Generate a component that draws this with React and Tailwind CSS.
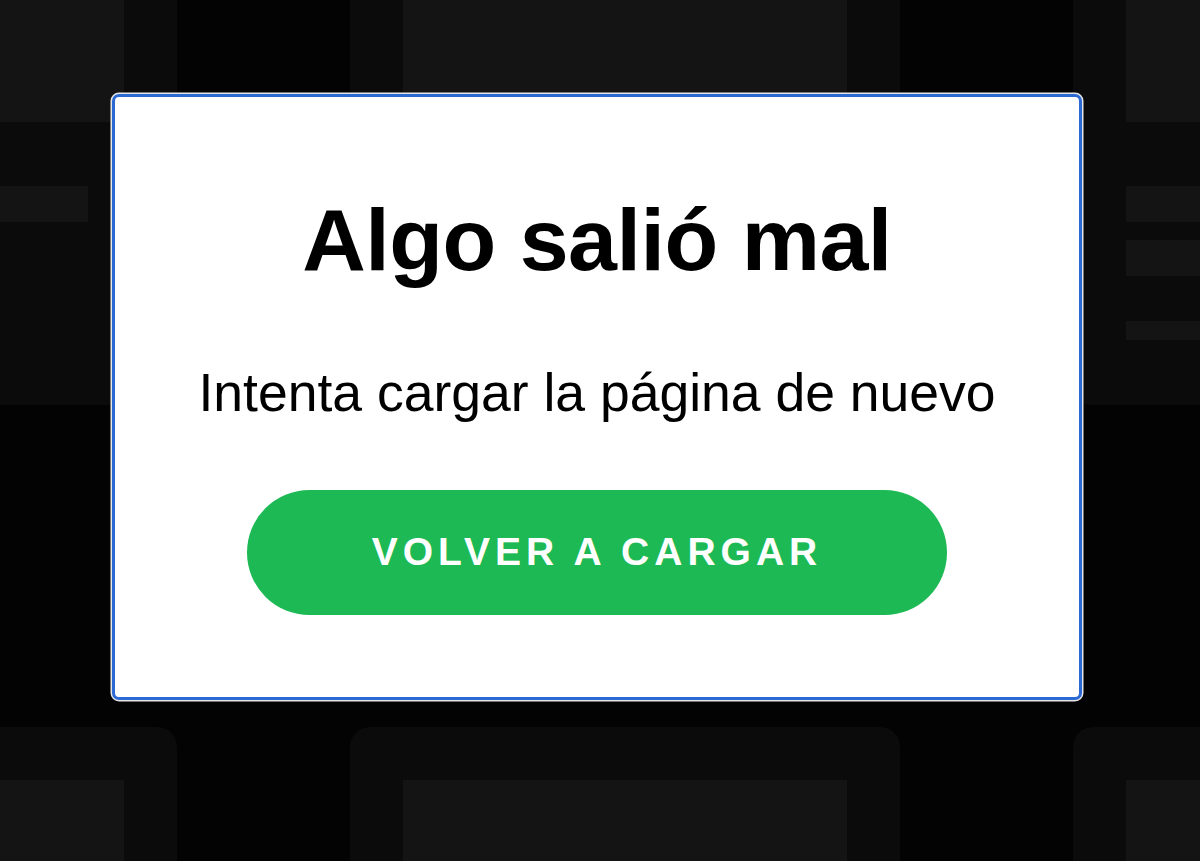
import React from "react";

const SkeletonCard = ({ top }) => {
  if (top) {
    return (
      <div className="w-[550px] h-[780px] shrink-0 bg-[#0b0b0b] rounded-b-[18px] px-[53px] pt-[53px]">
        <div className="w-full h-[444px] bg-[#141414]" />
        <div className="mt-[64px] w-[408px] h-[36px] bg-[#141414]" />
        <div className="mt-[18px] w-[300px] h-[36px] bg-[#141414]" />
        <div className="mt-[45px] w-[200px] h-[19px] bg-[#141414]" />
      </div>
    );
  }
  return (
    <div className="w-[550px] h-[400px] shrink-0 bg-[#0b0b0b] rounded-t-[20px] px-[53px] pt-[53px]">
      <div className="w-full h-[444px] bg-[#141414]" />
    </div>
  );
};

const App = () => {
  return (
    <div
      className="relative w-full h-screen overflow-hidden bg-[#030303]"
      style={{ fontFamily: '"Liberation Sans", Arial, sans-serif' }}
    >
      {/* Loading skeleton behind the modal */}
      <div className="flex flex-col -ml-[373px] -mt-[375px]">
        <div className="flex gap-[173px]">
          <SkeletonCard top />
          <SkeletonCard top />
          <SkeletonCard top />
        </div>
        <div className="flex gap-[173px] mt-[322px]">
          <SkeletonCard />
          <SkeletonCard />
          <SkeletonCard />
        </div>
      </div>

      {/* Error dialog */}
      <div className="absolute inset-0 flex justify-center items-start pt-[94px] pr-[6px]">
        <div className="w-[970px] h-[606px] bg-white rounded-[7px] border-[3px] border-[#2d69d2] shadow-[0_0_0_1.5px_#e6e6e6] flex flex-col items-center pt-[99px]">
          <h1 className="text-[88px] leading-[88px] font-bold text-black tracking-[-0.5px]">
            Algo salió mal
          </h1>
          <p className="mt-[82px] text-[53.5px] leading-[53.5px] text-black">
            Intenta cargar la página de nuevo
          </p>
          <button className="mt-[70px] w-[700px] h-[125px] rounded-full bg-[#1db954] text-white text-[39px] font-bold tracking-[5px] flex items-center justify-center">
            VOLVER A CARGAR
          </button>
        </div>
      </div>
    </div>
  );
};

export default App;
